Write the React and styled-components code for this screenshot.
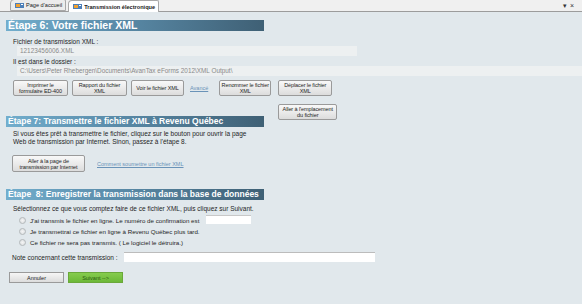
import React from "react";
import styled, { createGlobalStyle } from "styled-components";

const GlobalStyle = createGlobalStyle`
  html, body {
    margin: 0;
    padding: 0;
    background: #e1e8ec;
  }
  body {
    font-family: "Liberation Sans", Arial, sans-serif;
    font-size: 6.5px;
    color: #1e1e1e;
  }
`;

function TabIcon() {
  return (
    <svg width="9" height="7" viewBox="0 0 9 7">
      <rect x="0" y="1" width="9" height="5" fill="#4d7fb8" />
      <rect x="1" y="2" width="4" height="3" fill="#f0a030" />
      <rect x="6" y="2" width="2" height="1" fill="#ffffff" />
    </svg>
  );
}

function App() {
  return (
    <Window>
      <GlobalStyle />
      <TabStrip>
        <Tab>
          <TabIcon />
          Page d'accueil
        </Tab>
        <Tab $active>
          <TabIcon />
          Transmission électronique
        </Tab>
        <Controls>
          <span>▾</span>
          <span>×</span>
        </Controls>
      </TabStrip>

      <Content>
        <StepHeader $size={10.5}>Étape 6: Votre fichier XML</StepHeader>
        <Label $top={6}>Fichier de transmission XML :</Label>
        <ReadField $width={340}>12123456006.XML</ReadField>
        <Label $top={1}>Il est dans le dossier :</Label>
        <ReadField $width={565}>
          C:\Users\Peter Rhebergen\Documents\AvanTax eForms 2012\XML Output\
        </ReadField>

        <ButtonRow>
          <Button $width={55}>
            Imprimer le
            <br />
            formulaire ED-400
          </Button>
          <Button $width={55}>
            Rapport du fichier
            <br />
            XML
          </Button>
          <Button $width={53}>Voir le fichier XML</Button>
          <Link $left={2}>Avancé</Link>
          <Button $width={52} $left={7}>
            Renommer le fichier
            <br />
            XML
          </Button>
          <ButtonStack>
            <Button $width={54}>
              Déplacer le fichier
              <br />
              XML
            </Button>
            <Button $width={59}>
              Aller à l'emplacement
              <br />
              du fichier
            </Button>
          </ButtonStack>
        </ButtonRow>

        <StepHeader $top={20}>
          Étape 7: Transmettre le fichier XML à Revenu Québec
        </StepHeader>
        <Paragraph>
          Si vous êtes prêt à transmettre le fichier, cliquez sur le bouton pour
          ouvrir la page
          <br />
          Web de transmission par Internet. Sinon, passez à l'étape 8.
        </Paragraph>
        <LinkRow>
          <Button $width={73} $height={17}>
            Aller à la page de
            <br />
            transmission par Internet
          </Button>
          <Link $left={12}>Comment soumettre un fichier XML</Link>
        </LinkRow>

        <StepHeader $top={17}>
          Étape&nbsp; 8: Enregistrer la transmission dans la base de données
        </StepHeader>
        <Label $top={4} $left={7}>
          Sélectionnez ce que vous comptez faire de ce fichier XML, puis cliquez
          sur Suivant.
        </Label>
        <RadioList>
          <RadioRow>
            <Radio />
            J'ai transmis le fichier en ligne. Le numéro de confirmation est
            <SmallInput />
          </RadioRow>
          <RadioRow>
            <Radio />
            Je transmettrai ce fichier en ligne à Revenu Québec plus tard.
          </RadioRow>
          <RadioRow>
            <Radio />
            Ce fichier ne sera pas transmis. ( Le logiciel le détruira.)
          </RadioRow>
        </RadioList>
        <NoteRow>
          <NoteLabel>Note concernant cette transmission :</NoteLabel>
          <NoteInput />
        </NoteRow>
        <FooterRow>
          <FlatButton>Annuler</FlatButton>
          <FlatButton $primary>Suivant --&gt;</FlatButton>
        </FooterRow>
      </Content>
    </Window>
  );
}

const Window = styled.div`
  width: 582px;
  height: 304px;
  overflow: hidden;
  display: flex;
  flex-direction: column;
  background: #e1e8ec;
`;

const TabStrip = styled.div`
  height: 11px;
  background: #f0f0f0;
  border-bottom: 1px solid #9c9c9c;
  display: flex;
  align-items: flex-end;
  padding-left: 10px;
  gap: 2px;
`;

const Tab = styled.div`
  height: ${(p) => (p.$active ? "11px" : "10px")};
  margin-bottom: ${(p) => (p.$active ? "-1px" : "0")};
  display: flex;
  align-items: center;
  gap: 2px;
  padding: 0 3px 0 4px;
  background: ${(p) => (p.$active ? "#ffffff" : "#ececec")};
  border: 1px solid #a8a8a8;
  border-bottom: ${(p) => (p.$active ? "none" : "1px solid #a8a8a8")};
  border-radius: 4px 2px 0 0;
  font-size: 5.6px;
  font-weight: ${(p) => (p.$active ? 700 : 400)};
  color: #202020;
  white-space: nowrap;
`;

const Controls = styled.div`
  margin-left: auto;
  margin-right: 8px;
  align-self: center;
  display: flex;
  gap: 3px;
  font-size: 7px;
  color: #333;
`;

const Content = styled.div`
  flex: 1;
  padding: 8px 6px 0 6px;
  display: flex;
  flex-direction: column;
  align-items: flex-start;
`;

const StepHeader = styled.div`
  width: 256px;
  height: 11px;
  margin-top: ${(p) => p.$top || 0}px;
  padding-left: 2px;
  background: linear-gradient(90deg, #72aecd 0%, #5b8dab 40%, #3f6075 100%);
  color: #ffffff;
  font-family: "Liberation Sans", Arial, sans-serif;
  font-weight: 700;
  font-size: ${(p) => p.$size || 8.5}px;
  line-height: 11px;
  white-space: nowrap;
`;

const Label = styled.div`
  margin-top: ${(p) => p.$top || 0}px;
  margin-left: ${(p) => (p.$left ? p.$left : 7)}px;
  line-height: 9px;
  white-space: nowrap;
`;

const ReadField = styled.div`
  width: ${(p) => p.$width}px;
  height: 10px;
  margin-left: 11px;
  padding-left: 3px;
  box-sizing: border-box;
  background: #edf0f1;
  color: #8a8a8a;
  font-size: 6.4px;
  line-height: 10px;
  white-space: nowrap;
`;

const ButtonRow = styled.div`
  height: 16px;
  margin-top: 4px;
  margin-left: 7px;
  display: flex;
  align-items: flex-start;
  gap: 4px;
`;

const ButtonStack = styled.div`
  display: flex;
  flex-direction: column;
  gap: 8px;
  margin-left: 3px;
`;

const Button = styled.div`
  width: ${(p) => p.$width}px;
  height: ${(p) => p.$height || 16}px;
  margin-left: ${(p) => p.$left || 0}px;
  box-sizing: border-box;
  border: 1px solid #9a9a9a;
  border-radius: 2px;
  background: linear-gradient(#f8f8f8, #ebebeb 50%, #dcdcdc);
  display: flex;
  align-items: center;
  justify-content: center;
  text-align: center;
  font-size: 5.5px;
  line-height: 6px;
  letter-spacing: -0.1px;
  white-space: nowrap;
  flex-shrink: 0;
`;

const Link = styled.span`
  margin-left: ${(p) => p.$left || 0}px;
  align-self: center;
  color: #6a93b8;
  text-decoration: underline;
  font-size: 5.5px;
  white-space: nowrap;
`;

const Paragraph = styled.p`
  margin: 3px 0 0 7px;
  line-height: 8px;
  white-space: nowrap;
`;

const LinkRow = styled.div`
  margin-top: 9px;
  margin-left: 6px;
  display: flex;
  align-items: center;
`;

const RadioList = styled.div`
  margin-top: 2px;
  margin-left: 13px;
  display: flex;
  flex-direction: column;
  font-size: 6.2px;
`;

const RadioRow = styled.div`
  height: 11px;
  display: flex;
  align-items: center;
  gap: 4px;
  white-space: nowrap;
`;

const Radio = styled.span`
  width: 5px;
  height: 5px;
  border-radius: 50%;
  border: 1px solid #b4b8ba;
  background: radial-gradient(#f4f4f4, #d8dcde);
`;

const SmallInput = styled.span`
  width: 45px;
  height: 9px;
  margin-left: 3px;
  margin-top: -2px;
  background: #ffffff;
  border-top: 1px solid #c8c8c8;
  box-sizing: border-box;
`;

const NoteRow = styled.div`
  margin-top: 4px;
  margin-left: 6px;
  display: flex;
  align-items: center;
  gap: 6px;
`;

const NoteLabel = styled.span`
  font-size: 6.5px;
  white-space: nowrap;
`;

const NoteInput = styled.span`
  width: 251px;
  height: 10px;
  background: #ffffff;
  border-top: 1px solid #bcbcbc;
  box-sizing: border-box;
`;

const FooterRow = styled.div`
  margin-top: 10px;
  margin-left: 3px;
  display: flex;
  gap: 4px;
`;

const FlatButton = styled.div`
  width: 55px;
  height: 11px;
  box-sizing: border-box;
  border: 1px solid ${(p) => (p.$primary ? "#6aa83a" : "#9a9a9a")};
  background: ${(p) =>
    p.$primary
      ? "linear-gradient(#86cc4e, #6cb838)"
      : "linear-gradient(#f6f6f6, #dcdcdc)"};
  color: ${(p) => (p.$primary ? "#2c5a12" : "#222")};
  display: flex;
  align-items: center;
  justify-content: center;
  font-size: 5.5px;
`;

export default App;
